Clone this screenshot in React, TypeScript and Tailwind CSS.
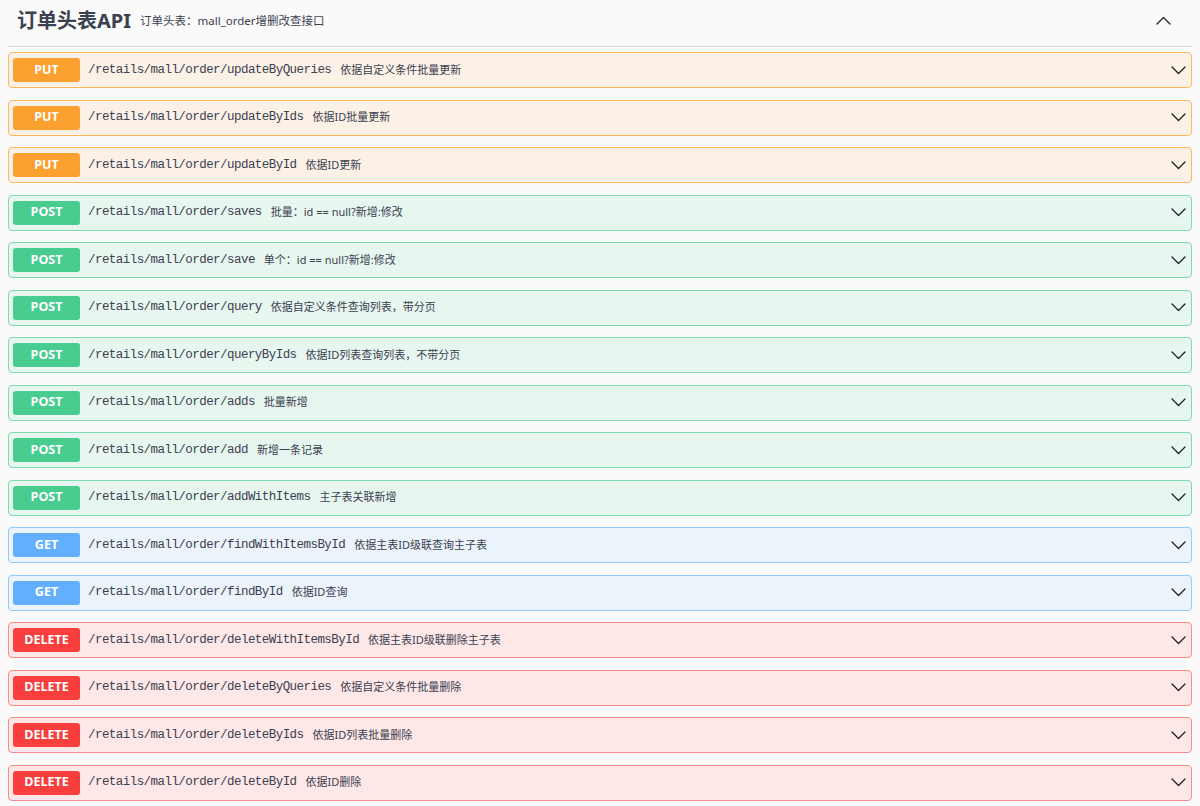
type Method = "PUT" | "POST" | "GET" | "DELETE";

const styles: Record<Method, { row: string; badge: string }> = {
    PUT: { row: "bg-[#fcf1e6] border-[#fcb860]", badge: "bg-[#fca130]" },
    POST: { row: "bg-[#e8f6f0] border-[#7fdab0]", badge: "bg-[#49cc90]" },
    GET: { row: "bg-[#ebf3fb] border-[#95c8fc]", badge: "bg-[#61affe]" },
    DELETE: { row: "bg-[#fee7e7] border-[#f88a8a]", badge: "bg-[#f93e3e]" },
};

const ops: { method: Method; path: string; desc: string }[] = [
    { method: "PUT", path: "/retails/mall/order/updateByQueries", desc: "依据自定义条件批量更新" },
    { method: "PUT", path: "/retails/mall/order/updateByIds", desc: "依据ID批量更新" },
    { method: "PUT", path: "/retails/mall/order/updateById", desc: "依据ID更新" },
    { method: "POST", path: "/retails/mall/order/saves", desc: "批量：id == null?新增:修改" },
    { method: "POST", path: "/retails/mall/order/save", desc: "单个：id == null?新增:修改" },
    { method: "POST", path: "/retails/mall/order/query", desc: "依据自定义条件查询列表，带分页" },
    { method: "POST", path: "/retails/mall/order/queryByIds", desc: "依据ID列表查询列表，不带分页" },
    { method: "POST", path: "/retails/mall/order/adds", desc: "批量新增" },
    { method: "POST", path: "/retails/mall/order/add", desc: "新增一条记录" },
    { method: "POST", path: "/retails/mall/order/addWithItems", desc: "主子表关联新增" },
    { method: "GET", path: "/retails/mall/order/findWithItemsById", desc: "依据主表ID级联查询主子表" },
    { method: "GET", path: "/retails/mall/order/findById", desc: "依据ID查询" },
    { method: "DELETE", path: "/retails/mall/order/deleteWithItemsById", desc: "依据主表ID级联删除主子表" },
    { method: "DELETE", path: "/retails/mall/order/deleteByQueries", desc: "依据自定义条件批量删除" },
    { method: "DELETE", path: "/retails/mall/order/deleteByIds", desc: "依据ID列表批量删除" },
    { method: "DELETE", path: "/retails/mall/order/deleteById", desc: "依据ID删除" },
];

function Arrow({ up }: { up?: boolean }) {
    return <svg width="15" height="9" viewBox="0 0 15 9" fill="none" stroke="#1f1f1f" strokeWidth="1.3" strokeLinecap="round" strokeLinejoin="round">
        <path d={up ? "M1 8 L7.5 1.5 L14 8" : "M1 1 L7.5 7.5 L14 1"} />
    </svg>
}

function OpRow({ method, path, desc }: { method: Method; path: string; desc: string }) {
    const s = styles[method];
    return <div className={"flex items-center h-[36px] rounded-[4px] border pl-[4px] pr-[5px] " + s.row}>
        <div className={"w-[67px] h-[24px] rounded-[3px] flex items-center justify-center text-white text-[12.5px] font-bold " + s.badge}
            style={{ fontFamily: '"Open Sans", "Noto Sans", sans-serif' }}>
            {method}
        </div>
        <span className="ml-[8px] text-[12.5px] tracking-[-0.55px] text-[#3b4151]"
            style={{ fontFamily: '"Liberation Mono", monospace' }}>
            {path}
        </span>
        <span className="ml-[9px] text-[11px] text-[#3b4151]"
            style={{ fontFamily: '"Noto Sans", "Noto Sans CJK SC", sans-serif' }}>
            {desc}
        </span>
        <div className="ml-auto flex items-center">
            <Arrow />
        </div>
    </div>
}

export default function App() {
    return <div className="min-h-screen bg-[#fafafa] px-[8px]" style={{ fontFamily: '"Noto Sans", "Noto Sans CJK SC", sans-serif' }}>
        <div className="h-[47px] pb-[5px] flex items-center border-b border-[#d8d9db] pl-[9px] pr-[21px]">
            <h4 className="text-[20px] font-bold text-[#3b4151]">订单头表API</h4>
            <span className="ml-[9px] text-[11.5px] text-[#3b4151]">订单头表：mall_order增删改查接口</span>
            <div className="ml-auto flex items-center">
                <Arrow up />
            </div>
        </div>
        <div className="flex flex-col gap-[11.5px] pt-[5px]">
            {ops.map((op) => <OpRow key={op.path} {...op} />)}
        </div>
    </div>
}
